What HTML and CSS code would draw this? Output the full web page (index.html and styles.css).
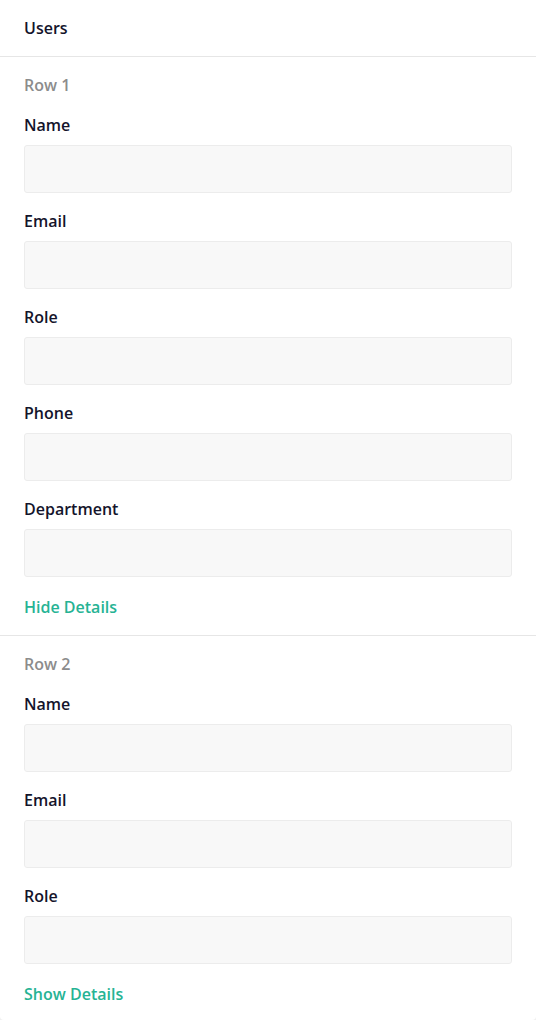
FILE: index.html
```html
<!DOCTYPE html>
<html>
<head>
<meta charset="utf-8">
<link rel="stylesheet" href="styles.css">
</head>
<body>
<div class="card">
  <div class="card-header">Users</div>
  <div class="row">
    <div class="row-title">Row 1</div>
    <div class="field"><label class="label">Name</label><div class="input"></div></div>
    <div class="field"><label class="label">Email</label><div class="input"></div></div>
    <div class="field"><label class="label">Role</label><div class="input"></div></div>
    <div class="field"><label class="label">Phone</label><div class="input"></div></div>
    <div class="field"><label class="label">Department</label><div class="input"></div></div>
    <a class="toggle">Hide Details</a>
  </div>
  <div class="row">
    <div class="row-title">Row 2</div>
    <div class="field"><label class="label">Name</label><div class="input"></div></div>
    <div class="field"><label class="label">Email</label><div class="input"></div></div>
    <div class="field"><label class="label">Role</label><div class="input"></div></div>
    <a class="toggle">Show Details</a>
  </div>
</div>
</body>
</html>
```
FILE: styles.css
```css
html, body {
  margin: 0;
  padding: 0;
  background: #f0f0f0;
}
body {
  font-family: "Open Sans", "Noto Sans", sans-serif;
  font-size: 16px;
  line-height: 24px;
}
.card {
  width: 536px;
  height: 1020px;
  box-sizing: border-box;
  background: #ffffff;
  border-radius: 0 0 4px 4px;
  overflow: hidden;
}
.card-header {
  padding: 16px 24px;
  border-bottom: 1px solid #e6e6e6;
  color: #14142b;
  font-weight: 600;
}
.row {
  display: flex;
  flex-direction: column;
  align-items: flex-start;
  padding: 16px 24px 16px;
  border-bottom: 1px solid #e6e6e6;
}
.row:last-child {
  border-bottom: none;
}
.row-title {
  color: #8c8c8c;
  font-weight: 600;
  margin-bottom: 16px;
}
.field {
  align-self: stretch;
  display: flex;
  flex-direction: column;
  margin-bottom: 16px;
}
.label {
  color: #14142b;
  font-weight: 600;
  margin-bottom: 8px;
}
.input {
  height: 48px;
  box-sizing: border-box;
  background: #f8f8f8;
  border: 1px solid #ececec;
  border-radius: 3px;
}
.toggle {
  margin-top: 2px;
  color: #26b394;
  font-weight: 600;
  cursor: pointer;
}
```
